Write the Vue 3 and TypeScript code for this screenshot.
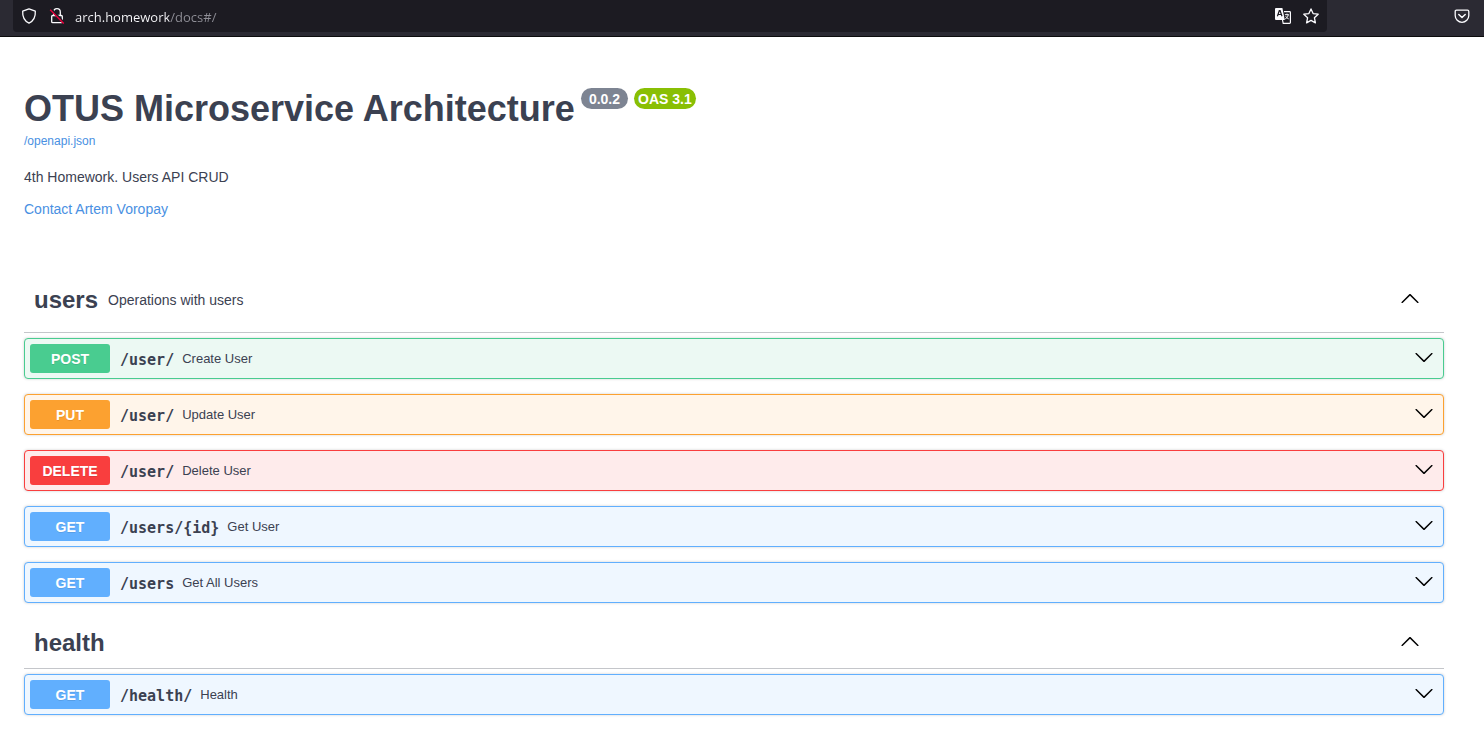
<script setup lang="ts">
import { ref } from 'vue'

interface Operation {
  method: 'post' | 'put' | 'delete' | 'get'
  path: string
  summary: string
}

interface Tag {
  name: string
  description?: string
  operations: Operation[]
}

const address = ref('arch.homework/docs#/')

const tags: Tag[] = [
  {
    name: 'users',
    description: 'Operations with users',
    operations: [
      { method: 'post', path: '/user/', summary: 'Create User' },
      { method: 'put', path: '/user/', summary: 'Update User' },
      { method: 'delete', path: '/user/', summary: 'Delete User' },
      { method: 'get', path: '/users/{id}', summary: 'Get User' },
      { method: 'get', path: '/users', summary: 'Get All Users' },
    ],
  },
  {
    name: 'health',
    operations: [{ method: 'get', path: '/health/', summary: 'Health' }],
  },
]
</script>

<template>
  <header class="toolbar">
    <div class="urlbar">
      <button class="tool" type="button" aria-label="Tracking protection">
        <svg viewBox="0 0 16 16" fill="none" stroke="#fbfbfe" stroke-width="1.3" stroke-linejoin="round">
          <path d="M8 .9 14.3 3.2c.3 4.6-.9 9.3-6.3 11.9C2.6 12.5 1.4 7.8 1.7 3.2z" />
        </svg>
      </button>
      <button class="tool" type="button" aria-label="Connection not secure">
        <svg viewBox="0 0 16 16" fill="none">
          <path d="M4.7 7.5V4a3.3 3.3 0 0 1 6.600 0v3.500" stroke="#fbfbfe" stroke-width="1.3" />
          <rect x="2.7" y="7.5" width="10.6" height="7.2" rx="1" stroke="#fbfbfe" stroke-width="1.3" />
          <path d="M2 1.2 15.2 15.4" stroke="#1c1b22" stroke-width="2.6" />
          <path d="M1.2 1.8 14.8 15.6" stroke="#e5003c" stroke-width="1.4" />
        </svg>
      </button>
      <input v-model="address" class="address" type="text" aria-label="Address" spellcheck="false" />
      <button class="tool" type="button" aria-label="Translate page">
        <svg viewBox="0 0 16 16">
          <path d="M1 0h6.4l2.4 12H1a1 1 0 0 1-1-1V1a1 1 0 0 1 1-1z" fill="#fbfbfe" />
          <path d="M2.4 8.3 4.3 2.7h.8L7 8.3M3.1 6.5h3.2" fill="none" stroke="#1c1b22" stroke-width="1.2" />
          <path d="M9 3.6h5.6c.5 0 .8.3.8.8v10.2c0 .5-.3.8-.8.8H8.2L7.5 12" fill="none" stroke="#fbfbfe" stroke-width="1.2" />
          <path d="M9.9 6.7h4M12 5.6v1.1M13.2 6.9c-.3 2-1.5 3.2-3 4M10.7 8.2c.7 1.3 1.7 2.2 3 2.7" fill="none" stroke="#fbfbfe" stroke-width="1" />
        </svg>
      </button>
      <button class="tool" type="button" aria-label="Bookmark this page">
        <svg viewBox="0 0 16 16" fill="none" stroke="#fbfbfe" stroke-width="1.3" stroke-linejoin="round">
          <path d="m8 .9 2.1 4.7 5.1.6-3.8 3.5 1 5.2L8 12.4l-4.4 2.500 1-5.2L.8 6.2l5.1-.6z" />
        </svg>
      </button>
    </div>
    <button class="tool" type="button" aria-label="Save to Pocket">
      <svg viewBox="0 0 16 16" fill="none" stroke="#fbfbfe" stroke-width="1.3" stroke-linecap="round" stroke-linejoin="round">
        <path d="M2.500 2.2h11c.8 0 1.3.5 1.3 1.3v4a6.8 6.8 0 0 1-13.6 0v-4c0-.8.5-1.3 1.3-1.3z" />
        <path d="m4.8 6.5 3.2 3 3.2-3" stroke-width="1.5" />
      </svg>
    </button>
  </header>

  <main class="docs">
    <section class="info">
      <h1 class="title">
        OTUS Microservice Architecture
        <span class="badges">
          <small class="badge version">0.0.2</small>
          <small class="badge oas">OAS 3.1</small>
        </span>
      </h1>
      <a class="spec" href="/openapi.json">/openapi.json</a>
      <p class="about">4th Homework. Users API CRUD</p>
      <a class="contact" href="#contact">Contact Artem Voropay</a>
    </section>

    <section v-for="tag in tags" :key="tag.name" class="tag">
      <div class="tag-head">
        <h2 class="tag-name">{{ tag.name }}</h2>
        <p v-if="tag.description" class="tag-text">{{ tag.description }}</p>
        <button class="toggle" type="button" :aria-label="`Collapse ${tag.name}`">
          <svg class="up" viewBox="0 0 20 20">
            <path d="M17.418 6.109c.272-.268.709-.268.979 0s.271.701 0 .969l-7.908 7.83c-.27.268-.707.268-.979 0l-7.908-7.83c-.27-.268-.27-.701 0-.969.271-.268.709-.268.979 0L10 13.25z" />
          </svg>
        </button>
      </div>
      <div class="operations">
        <div
          v-for="op in tag.operations"
          :key="op.method + op.path"
          class="operation"
          :class="op.method"
        >
          <span class="method">{{ op.method.toUpperCase() }}</span>
          <a class="path" :href="`#${op.path}`">{{ op.path }}</a>
          <span class="summary">{{ op.summary }}</span>
          <button class="toggle" type="button" :aria-label="`Expand ${op.summary}`">
            <svg viewBox="0 0 20 20">
              <path d="M17.418 6.109c.272-.268.709-.268.979 0s.271.701 0 .969l-7.908 7.83c-.27.268-.707.268-.979 0l-7.908-7.83c-.27-.268-.27-.701 0-.969.271-.268.709-.268.979 0L10 13.25z" />
            </svg>
          </button>
        </div>
      </div>
    </section>
  </main>
</template>

<style>
body {
  margin: 0;
  background: #fff;
}
</style>

<style scoped>
button {
  display: flex;
  flex: none;
  margin: 0;
  border: 0;
  padding: 0;
  background: none;
  cursor: pointer;
}

a {
  text-decoration: none;
}

.toolbar {
  display: flex;
  align-items: flex-start;
  justify-content: space-between;
  height: 36px;
  border-bottom: 1px solid #0c0c0d;
  padding: 0 14px 0 13px;
  background: #2b2a33;
}

.urlbar {
  display: flex;
  flex: 0 1 1314px;
  align-items: center;
  gap: 12px;
  box-sizing: border-box;
  height: 32px;
  border-radius: 0 0 4px 4px;
  padding: 0 8px;
  background: #1c1b22;
}

.tool svg {
  width: 16px;
  height: 16px;
}

.toolbar > .tool {
  align-items: center;
  height: 32px;
}

/* The host part is bright and the rest of the address is dimmed. */
.address {
  flex: 1;
  min-width: 0;
  margin: 0 0 0 -2px;
  border: 0;
  padding: 2px 0 0;
  outline: 0;
  background: linear-gradient(90deg, #fbfbfe 94px, #8f8f97 94px);
  background-clip: text;
  -webkit-background-clip: text;
  -webkit-text-fill-color: transparent;
  font: 13px/24px "Open Sans", "Noto Sans", sans-serif;
}

.docs {
  padding: 51px 40px 26px 24px;
  color: #3b4151;
  font-family: "Liberation Sans", Arial, sans-serif;
  font-size: 14px;
}

.info {
  display: flex;
  flex-direction: column;
  align-items: flex-start;
  margin-bottom: 49px;
}

.title {
  display: flex;
  align-items: flex-start;
  gap: 6px;
  margin: 0;
  font-size: 36px;
  line-height: 42px;
}

.badges {
  display: flex;
  gap: 6px;
}

.badge {
  border-radius: 11px;
  padding: 2px 8px 0;
  background: #7d8492;
  color: #fff;
  font-size: 14px;
  line-height: 19px;
}

.badge.oas {
  padding: 2px 4px 0;
  background: #89bf04;
}

.spec {
  margin-top: 2px;
  color: #4990e2;
  font-size: 12px;
  line-height: 18px;
}

.about {
  margin: 18px 0 14px;
  line-height: 18px;
}

.contact {
  color: #4990e2;
  line-height: 18px;
}

.tag + .tag {
  margin-top: 15px;
}

.tag-head {
  display: flex;
  align-items: center;
  border-bottom: 1px solid rgba(59, 65, 81, 0.3);
  padding: 10px 20px 10px 10px;
}

.tag-name {
  margin: 0;
  font-size: 24px;
  line-height: 30px;
}

.tag-text {
  margin: 15px 10px 13px;
  line-height: 17px;
}

.toggle {
  margin-left: auto;
  padding: 0 4px 2px;
}

.toggle svg {
  width: 20px;
  height: 20px;
}

.toggle .up {
  transform: rotate(180deg);
}

.operations {
  display: flex;
  flex-direction: column;
  gap: 15px;
  padding-top: 5px;
}

.operation {
  display: flex;
  align-items: center;
  border: 1px solid;
  border-radius: 4px;
  padding: 5px;
  box-shadow: 0 0 3px rgba(0, 0, 0, 0.19);
}

.operation .toggle {
  padding-bottom: 4px;
}

.method {
  width: 80px;
  border-radius: 3px;
  padding-top: 2px;
  color: #fff;
  font-weight: 700;
  line-height: 27px;
  text-align: center;
  text-shadow: 0 1px 0 rgba(0, 0, 0, 0.1);
}

.path {
  padding: 2px 8px 0 10px;
  color: #3b4151;
  font: 700 15px/20px "DejaVu Sans Mono", monospace;
}

.summary {
  font-size: 13px;
  line-height: 20px;
}

.post {
  border-color: #49cc90;
  background: #ecf9f3;
}

.post .method {
  background: #49cc90;
}

.put {
  border-color: #fca130;
  background: #fff5ea;
}

.put .method {
  background: #fca130;
}

.delete {
  border-color: #f93e3e;
  background: #feebeb;
}

.delete .method {
  background: #f93e3e;
}

.get {
  border-color: #61affe;
  background: #eff7ff;
}

.get .method {
  background: #61affe;
}
</style>
